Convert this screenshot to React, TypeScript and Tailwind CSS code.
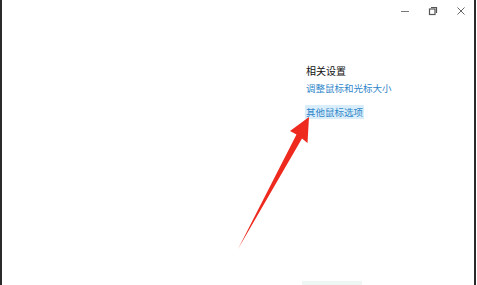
const Settings = () => {
  return (
    <div className="w-[477px] h-[285px] bg-white overflow-hidden">
      <div
        className="relative h-full w-[476px] border-l-2 border-r-2 border-[#2a2a2a] bg-white"
        style={{ fontFamily: '"Noto Sans CJK SC", "Noto Sans", sans-serif' }}
      >
        {/* title bar */}
        <div className="flex justify-end items-center h-[22px] pr-[8px] gap-[18px] text-[#666]">
          <svg width="10" height="10" viewBox="0 0 10 10">
            <path d="M1 5.5h8" stroke="#777" strokeWidth="1" />
          </svg>
          <svg width="10" height="10" viewBox="0 0 10 10">
            <path d="M3 1.5h5.5v5.5" fill="none" stroke="#555" strokeWidth="1.2" />
            <rect x="1.5" y="3" width="5.5" height="5.5" fill="none" stroke="#555" strokeWidth="1.2" />
          </svg>
          <svg width="10" height="10" viewBox="0 0 10 10">
            <path d="M1.5 1.5l7 7M8.5 1.5l-7 7" stroke="#666" strokeWidth="1" />
          </svg>
        </div>

        {/* related settings */}
        <div className="flex flex-col items-start pl-[304px] pt-[42px]">
          <span className="text-[10px] leading-[14px] text-[#111]">相关设置</span>
          <span className="mt-[3px] text-[9.5px] leading-[14px] text-[#2f86c9]">调整鼠标和光标大小</span>
          <span className="mt-[10px] -ml-[1px] px-[1px] bg-[#d9eefa] text-[9.5px] leading-[14px] text-[#2f86c9]">
            其他鼠标选项
          </span>
        </div>

        {/* red annotation arrow */}
        <svg className="absolute left-0 top-0 pointer-events-none" width="477" height="285" viewBox="0 0 477 285">
          <polygon
            points="307,117 288,131 294.5,134.5 236,249 300,138.5 305.5,143"
            fill="#ee2a1f"
          />
        </svg>

        {/* faint bottom strip */}
        <div className="absolute left-[300px] bottom-0 w-[60px] h-[4px] bg-[#eef7f3]" />
      </div>
    </div>
  )
}

export default function App() {
  return <Settings />
}
